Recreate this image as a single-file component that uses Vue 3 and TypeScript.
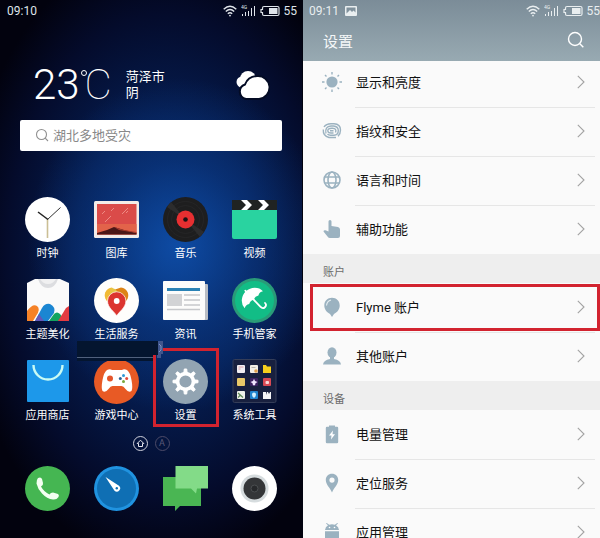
<script setup lang="ts">
import { ref } from 'vue'

interface App {
  id: string
  label: string
  marked?: boolean
}

interface Item {
  id: string
  label: string
  marked?: boolean
}

interface Section {
  title: string
  items: Item[]
}

const query = ref('')

const apps: App[] = [
  { id: 'clock', label: '时钟' },
  { id: 'gallery', label: '图库' },
  { id: 'music', label: '音乐' },
  { id: 'video', label: '视频' },
  { id: 'theme', label: '主题美化' },
  { id: 'life', label: '生活服务' },
  { id: 'news', label: '资讯' },
  { id: 'security', label: '手机管家' },
  { id: 'store', label: '应用商店' },
  { id: 'games', label: '游戏中心' },
  { id: 'settings', label: '设置', marked: true },
  { id: 'tools', label: '系统工具' },
]

const sections: Section[] = [
  {
    title: '',
    items: [
      { id: 'display', label: '显示和亮度' },
      { id: 'finger', label: '指纹和安全' },
      { id: 'language', label: '语言和时间' },
      { id: 'access', label: '辅助功能' },
    ],
  },
  {
    title: '账户',
    items: [
      { id: 'flyme', label: 'Flyme 账户', marked: true },
      { id: 'other', label: '其他账户' },
    ],
  },
  {
    title: '设备',
    items: [
      { id: 'power', label: '电量管理' },
      { id: 'location', label: '定位服务' },
      { id: 'apps', label: '应用管理' },
    ],
  },
]

const teeth = [0, 45, 90, 135, 180, 225, 270, 315]
</script>

<template>
  <main class="screens">
    <section class="home">
      <div class="status">
        <span>09:10</span>
        <span class="status-icons">
          <svg width="14" height="12" viewBox="0 0 14 12" fill="none" stroke="currentColor" stroke-width="1.4">
            <path d="M.7 4.2Q7-1.6 13.3 4.2M2.8 6.5Q7 2.600 11.2 6.5M4.8 8.7Q7 6.7 9.2 8.7" />
            <circle cx="7" cy="10.600" r=".9" fill="currentColor" stroke="none" />
          </svg>
          <svg width="15" height="12" viewBox="0 0 15 12" fill="currentColor">
            <text x="0" y="4" font-size="5">4G</text>
            <path d="M1 9h1v2H1zM4 7h1v4H4zM7 6h1v5H7zM10 3h1v8h-1zM13 1h1v10h-1z" />
          </svg>
          <svg width="20" height="12" viewBox="0 0 20 12" fill="none" stroke="currentColor" stroke-width="1.200">
            <path d="M4 1.500h13.500q1.500 0 1.500 1.500v6q0 1.500-1.500 1.500H4Q2.500 10.500 2.500 9V7.500H1v-3h1.500V3Q2.500 1.500 4 1.500z" />
            <path d="M9 3h8.500v6H9z" fill="currentColor" stroke="none" />
          </svg>
          <span>55</span>
        </span>
      </div>

      <div class="weather">
        <span class="temp">23</span>
        <span class="degree" aria-hidden="true"></span>
        <span class="unit">C</span>
        <span class="place">菏泽市<br />阴</span>
        <svg class="cloud" width="34" height="30" viewBox="0 0 34 30">
          <circle cx="12" cy="9" r="8" fill="#fff" />
          <circle cx="6" cy="12" r="5.500" fill="#fff" />
          <path d="M10 29a7.500 7.500 0 0 1-1-14.500Q12 6.500 21 6a11.300 11.300 0 0 1 2 23z" fill="#fff" stroke="#030b24" stroke-width="2" />
        </svg>
      </div>

      <form class="search" @submit.prevent>
        <svg width="15" height="15" viewBox="0 0 15 15" fill="none" stroke="#909090" stroke-width="1.100">
          <circle cx="6.500" cy="6.500" r="5" />
          <path d="M10.200 10.200l2.800 2.800" />
        </svg>
        <input v-model="query" type="search" aria-label="搜索" placeholder="湖北多地受灾" />
      </form>

      <nav class="apps">
        <button v-for="app in apps" :key="app.id" type="button" class="app" :class="{ marked: app.marked }">
          <svg width="45" height="45" viewBox="0 0 45 45">
            <template v-if="app.id === 'clock'">
              <circle cx="22.500" cy="22.500" r="22.500" fill="#fff" />
              <path d="M22.500 22v19" stroke="#cbbf95" stroke-width="1.600" />
              <path d="M23 22.500L13 15" stroke="#222" stroke-width="1.500" />
              <path d="M22.500 22.500L35.500 10.500" stroke="#333" />
            </template>
            <template v-else-if="app.id === 'gallery'">
              <rect y="4" width="45" height="37" rx="1.500" fill="#f3ece9" />
              <path d="M3 7h39.500v30.500H3z" fill="#da4b49" />
              <path d="M3 27h39.500v10.500H3z" fill="#e2634a" />
              <path d="M3 36l10-3 7-3 10 3 12.500 3v1.500H3z" fill="#4b1718" />
              <path d="M20 30l10 3 12.500 2v1L25 33z" fill="#a83a2e" />
              <path d="M11 25l6-6M28 17l6-6M17 14l3-3M32 16l2-2M8 17l3-3" stroke="#f29b93" stroke-width=".8" />
            </template>
            <template v-else-if="app.id === 'music'">
              <circle cx="22.500" cy="22.500" r="22.500" fill="#1e1e1f" />
              <circle cx="22.500" cy="22.500" r="18" fill="none" stroke="#282829" stroke-width=".7" />
              <circle cx="22.500" cy="22.500" r="14" fill="none" stroke="#282829" stroke-width=".7" />
              <path d="M22.500 22.500L4 10l4-5zM22.500 22.500L41 35l-4 5z" fill="#2c2c2d" />
              <circle cx="22.500" cy="22.500" r="9" fill="#e72f31" />
              <circle cx="22.500" cy="22.500" r="2.300" fill="#1c1214" />
            </template>
            <template v-else-if="app.id === 'video'">
              <path d="M0 12h45v28q0 2-2 2H2q-2 0-2-2z" fill="#29d3a0" />
              <path d="M0 3h45v10H0z" fill="#202322" />
              <path d="M9 3h6l5 5-5 5H9l5-5zM26 3h6l5 5-5 5h-6l5-5z" fill="#fff" />
            </template>
            <template v-else-if="app.id === 'theme'">
              <path d="M10 1h25l9 4v36q0 2-2 2H4q-2 0-2-2V5z" fill="#fafafa" />
              <path d="M13 1h20q-3 9-10 9T13 1z" fill="#dcdde0" />
              <path d="M15 1h16q-3 5-8 5T15 1z" fill="#f0f0f1" />
              <path d="M2 33q6-8 10-5 4 3-1 10l-3 5H2z" fill="#f58227" />
              <path d="M24 43l5-7q3-3 6 0 3 3 0 7z" fill="#12a45f" />
              <path d="M33 43l8-13 3-2v15z" fill="#e23b41" />
              <path d="M10 43l7-13q3-5 8-4 6 3 4 9l-6 8z" fill="#1b86d2" />
              <path d="M10 43l4-7 5 7z" fill="#6257b8" />
            </template>
            <template v-else-if="app.id === 'life'">
              <circle cx="22.500" cy="22.500" r="22.500" fill="#fffefc" />
              <path d="M18 9.500a8 8 0 0 0-5.500 13l5.500 5 5-12z" fill="#f1ba35" />
              <path d="M27 9.500a8 8 0 0 1 5.500 13l-5.500 5-6-16z" fill="#dd8416" />
              <path d="M17 10q6 0 7 6l-7 2q-2-4 0-8z" fill="#e6c545" />
              <path d="M22.700 38C21 34 13.500 30 13.500 23a9.200 9.200 0 0 1 18.400 0c0 7-7.500 11-9.200 15z" fill="#dc352f" stroke="#fff" stroke-width=".7" />
              <circle cx="22.700" cy="23" r="2.900" fill="#fff" />
            </template>
            <template v-else-if="app.id === 'news'">
              <rect x="36" y="6" width="9" height="36" rx="1" fill="#b9bdc4" />
              <rect y="3" width="42" height="39" rx="1" fill="#fcfcfb" />
              <path d="M4 10h33v3H4z" fill="#2a82b5" />
              <path d="M4 16h15v12H4z" fill="#d2d3d5" />
              <path d="M21 17h16M21 22h16M21 27h16M4 31.500h33" stroke="#c6c8cb" stroke-width="1.500" />
            </template>
            <template v-else-if="app.id === 'security'">
              <circle cx="22.500" cy="22.500" r="22.500" fill="#2a9b78" />
              <circle cx="22.500" cy="22.500" r="19.500" fill="#12bd86" />
              <g transform="rotate(-43 22.500 22.500)">
                <path d="M10 21.500a12.500 11.500 0 0 1 25 0q-3-2-6.200 0-3.200-2-6.300 0-3.200-2-6.300 0-3.200-2-6.200 0z" fill="#fff" />
                <path d="M22.500 9v22q0 3.500 3 3.500t3-3" fill="none" stroke="#fff" stroke-width="1.800" stroke-linecap="round" />
              </g>
            </template>
            <template v-else-if="app.id === 'store'">
              <rect x="2" y="1" width="42" height="42" rx="1" fill="#1d98ea" />
              <path d="M8.500 6a14.500 14.500 0 0 0 29 0" fill="none" stroke="#c9fbf4" stroke-width="2.400" />
            </template>
            <template v-else-if="app.id === 'games'">
              <circle cx="22.500" cy="22.500" r="22.500" fill="#e85a25" />
              <path d="M13 11q3-1.500 5 0h10q2-1.500 5 0 3 2 4.500 10t0 11q-3 2-6-2-2-3-4-3h-9q-2 0-4 3-3 4-6 2-1.500-3 0-11T13 11z" fill="#fff" />
              <circle cx="16" cy="19.500" r="3" fill="#e4562c" />
              <circle cx="29.500" cy="16.500" r="1.500" fill="#2d9ad9" />
              <circle cx="26.300" cy="19.500" r="1.500" fill="#2d6294" />
              <circle cx="32.700" cy="19.500" r="1.500" fill="#e34b3b" />
              <circle cx="29.500" cy="22.500" r="1.500" fill="#79a73b" />
            </template>
            <template v-else-if="app.id === 'settings'">
              <circle cx="22.500" cy="22.500" r="22.500" fill="#92a4b2" />
              <path v-for="a in teeth" :key="a" :transform="`rotate(${a} 22.500 22.500)`" d="M20.800 14l.5-4h2.400l.5 4z" fill="#fff" stroke="#fff" stroke-linejoin="round" />
              <circle cx="22.500" cy="22.500" r="7.900" fill="none" stroke="#fff" stroke-width="3.600" />
            </template>
            <template v-else>
              <rect x="1" y=".5" width="43" height="43" rx="1.500" fill="#18203f" stroke="#343d58" />
              <rect x="5" y="6" width="8" height="8" rx="1" fill="#f1eef2" />
              <path d="M6.500 8h5M6.500 10h2" stroke="#d9a0a6" />
              <rect x="18" y="6" width="8" height="8" rx="1" fill="#f3efe6" />
              <path d="M19.500 8.500h4" stroke="#b8b4ac" />
              <circle cx="24" cy="12" r="1.800" fill="#e0a04c" />
              <path d="M31 6h3l1 1.500h4V14h-8z" fill="#f7cf1d" />
              <rect x="5" y="19" width="8" height="8" rx="1" fill="#e9c968" />
              <rect x="18" y="19" width="8" height="8" rx="1" fill="#3b2260" />
              <path d="M22 19.800l1 2.200 2.500 1-2 1.200-.5 2h-2l-.5-2-2-1.200 2.500-1z" fill="#f0e6ff" />
              <rect x="31" y="19" width="8" height="8" rx="1" fill="#d94a55" />
              <rect x="33.500" y="22" width="3.500" height="3" rx="1" fill="#f8d8d8" />
              <rect x="5" y="32" width="8" height="8" rx="1" fill="#eef0ea" />
              <path d="M6 34l5 4.500M6 38.500l2-2" stroke="#5f8a58" stroke-width="1.200" />
              <rect x="18" y="32" width="8" height="8" rx="1" fill="#1f83cf" />
              <path d="M22 33.500q2 0 2 2T22 39q-2-1.500-2-3.500t2-2z" fill="#d4f1ff" />
              <path d="M31 33h3v3l1-3h1l1 2 1-2h1v7h-8z" fill="#f4f4f6" />
            </template>
          </svg>
          <span>{{ app.label }}</span>
        </button>
        <svg class="patch" width="86" height="20" viewBox="0 0 86 20" aria-hidden="true">
          <path d="M0 0h81v14h-5v6H0z" fill="#04152f" />
          <path d="M0 16.500h76" stroke="#50607c" />
          <path d="M81 0h5v13h-2v4h-4v-3h1z" fill="#40558c" />
          <path d="M82 3l2 2v4l-2 2" fill="none" stroke="#7f93c4" />
        </svg>
      </nav>

      <div class="pages">
        <button type="button" class="page active" aria-label="主屏">
          <svg width="9" height="9" viewBox="0 0 9 9" fill="none" stroke="currentColor">
            <path d="M1.200 4.500L4.500 1.200l3.300 3.300H6.500V7.500h-4v-3z" />
          </svg>
        </button>
        <button type="button" class="page">A</button>
      </div>

      <nav class="dock">
        <button type="button" class="app" aria-label="电话">
          <svg width="45" height="45" viewBox="0 0 45 45">
            <circle cx="22.500" cy="22.500" r="22.500" fill="#45b652" />
            <path d="M13 12q3-1.500 4 1l1 4q.5 2-2 3.500 3 5.500 8.500 8 1-2 3.500-2l5 1.500q1.500 1 .5 3-2 3-5.500 2.500-6-.5-11-6-4.500-5-5.500-10 0-4 1.500-5.500z" fill="#f3fff1" />
          </svg>
        </button>
        <button type="button" class="app" aria-label="浏览器">
          <svg width="45" height="45" viewBox="0 0 45 45">
            <circle cx="22.500" cy="22.500" r="22.500" fill="#2093e0" />
            <circle cx="22.500" cy="22.500" r="19.500" fill="#0f6fb4" />
            <path d="M11.500 11l13.500 8.700a3.300 3.300 0 0 1-4.500 5z" fill="#fff" />
            <circle cx="22.800" cy="22.300" r="1.200" fill="#0f6fb4" />
          </svg>
        </button>
        <button type="button" class="app" aria-label="信息">
          <svg width="45" height="45" viewBox="0 0 45 45">
            <path d="M0 11h38v29H17l-5 5v-5H0z" fill="#4ab653" />
            <path d="M12.500 0H45v22.500H34l-1 5-5-5H12.500z" fill="#83db88" />
          </svg>
        </button>
        <button type="button" class="app" aria-label="相机">
          <svg width="45" height="45" viewBox="0 0 45 45">
            <circle cx="22.500" cy="22.500" r="22.500" fill="#fff" />
            <circle cx="22.500" cy="22.500" r="14" fill="#d6dcde" />
            <circle cx="22.500" cy="22.500" r="11" fill="#343638" />
            <circle cx="22.500" cy="22.500" r="3.500" fill="#27292b" stroke="#4b4e50" />
          </svg>
        </button>
      </nav>
    </section>

    <section class="settings">
      <header class="head">
        <div class="status">
          <span class="clock">
            09:11
            <svg width="12" height="10" viewBox="0 0 12 10">
              <path d="M1 0h10q1 0 1 1v8q0 1-1 1H1q-1 0-1-1V1q0-1 1-1zM1.500 1.500v6L5 4l2 2 1.500-1.500 2 2v-5z" fill="currentColor" fill-rule="evenodd" />
            </svg>
          </span>
          <span class="status-icons">
            <svg width="14" height="12" viewBox="0 0 14 12" fill="none" stroke="currentColor" stroke-width="1.4">
              <path d="M.7 4.2Q7-1.6 13.3 4.2M2.8 6.5Q7 2.600 11.2 6.5M4.8 8.7Q7 6.7 9.2 8.7" />
              <circle cx="7" cy="10.600" r=".9" fill="currentColor" stroke="none" />
            </svg>
            <svg width="15" height="12" viewBox="0 0 15 12" fill="currentColor">
              <text x="0" y="4" font-size="5">4G</text>
              <path d="M1 9h1v2H1zM4 7h1v4H4zM7 6h1v5H7zM10 3h1v8h-1zM13 1h1v10h-1z" />
            </svg>
            <svg width="20" height="12" viewBox="0 0 20 12" fill="none" stroke="currentColor" stroke-width="1.200">
              <path d="M4 1.500h13.500q1.500 0 1.500 1.500v6q0 1.500-1.500 1.500H4Q2.500 10.500 2.500 9V7.500H1v-3h1.500V3Q2.500 1.500 4 1.500z" />
              <path d="M9 3h8.500v6H9z" fill="currentColor" stroke="none" />
            </svg>
            <span>55</span>
          </span>
        </div>
        <div class="titlebar">
          <h1>设置</h1>
          <button type="button" class="find" aria-label="搜索设置">
            <svg width="18" height="18" viewBox="0 0 18 18" fill="none" stroke="#fff" stroke-width="1.400">
              <circle cx="8" cy="8" r="6.500" />
              <path d="M12.800 12.800l3.500 3.500" />
            </svg>
          </button>
        </div>
      </header>

      <div class="list">
        <template v-for="section in sections" :key="section.title">
          <h2 v-if="section.title">{{ section.title }}</h2>
          <ul>
            <li v-for="item in section.items" :key="item.id">
              <a href="#" :class="{ marked: item.marked }">
                <svg width="20" height="20" viewBox="0 0 20 20" fill="#9bb2c0">
                  <template v-if="item.id === 'display'">
                    <circle cx="10" cy="10" r="5.600" />
                    <path d="M10 0v2.500M10 17.500V20M0 10h2.500M17.500 10H20M3 3l1.500 1.500M15.500 15.500L17 17M17 3l-1.500 1.500M4.500 15.500L3 17" stroke="#9bb2c0" stroke-width="1.400" />
                  </template>
                  <g v-else-if="item.id === 'finger'" fill="none" stroke="#9bb2c0" stroke-width="1.400">
                    <path d="M2 6Q4 2.700 9 2.700h3q6.500.3 6.500 6.300 0 4-2.500 6.300M1.300 8.500Q.8 15 7 16.500h7M4 12.500Q2.500 5.500 9 5h2.500q4.800.5 4.800 4.500 0 4.500-4.300 4.700H8.500q-2 0-3-1.200M13.500 11.500q1.500-4.200-3-4.300-5-.2-4.700 2.800.3 2 3.200 2h2.500M8 9.700h3.500" />
                  </g>
                  <g v-else-if="item.id === 'language'" fill="none" stroke="#9bb2c0" stroke-width="1.600">
                    <circle cx="10" cy="10" r="8" />
                    <ellipse cx="10" cy="10" rx="4" ry="8" />
                    <path d="M2.700 7h14.600M2.700 13h14.600" />
                  </g>
                  <path v-else-if="item.id === 'access'" d="M6.500 2.500q0-1.500 1.500-1.500t1.500 1.500V7l6.500 1q2 .5 2 2.500v6.500q0 2-2 2H8q-1.500 0-2.500-1.500L1.500 12.500q0-1.500 2-1.200l3 1.200z" />
                  <g v-else-if="item.id === 'flyme'">
                    <path d="M10 .8c4.500 0 7.700 3.200 7.700 7.700 0 4-2.700 7-5.700 8.500l-2 3-2-3C5 15.500 2.300 12.500 2.300 8.500 2.300 4 5.500.8 10 .8z" />
                    <path d="M4.500 8.500Q5 4 9 3" fill="none" stroke="#e5edf1" stroke-width="1.100" />
                  </g>
                  <g v-else-if="item.id === 'other'">
                    <ellipse cx="10" cy="6.500" rx="4.500" ry="5.300" />
                    <path d="M8 10h4v3q6.500 1 7 5.500H1Q1.500 14 8 13z" />
                  </g>
                  <g v-else-if="item.id === 'power'">
                    <path d="M7 1.500h6v1.200h2q1.200 0 1.200 1.300v14q0 1.200-1.200 1.200H5q-1.200 0-1.200-1.200V4q0-1.300 1.200-1.300h2z" />
                    <path d="M11 6.500l-4 5h2.500l-.5 4 4-5.200h-2.500z" fill="#fff" />
                  </g>
                  <path v-else-if="item.id === 'location'" fill-rule="evenodd" d="M10 .8c3.600 0 6.200 2.700 6.200 6.200C16.200 11.500 12.500 14 10 19.500 7.500 14 3.800 11.500 3.800 7 3.800 3.500 6.400.8 10 .8zM10 4.500a2.600 2.600 0 1 0 0 5.200 2.600 2.600 0 0 0 0-5.200z" />
                  <g v-else>
                    <path d="M3 8q.3-3.300 3-4.800L4 1.500l.7-.6 2.500 1.900q2.800-1 5.600 0L15.300.9l.7.6-2 1.700q2.700 1.500 3 4.800zM3 9.200h14V17q0 2-2 2H5q-2 0-2-2z" />
                    <circle cx="7.500" cy="5.500" r=".8" fill="#fff" />
                    <circle cx="12.500" cy="5.500" r=".8" fill="#fff" />
                  </g>
                </svg>
                <span>{{ item.label }}</span>
                <svg class="chevron" width="8" height="14" viewBox="0 0 8 14" fill="none" stroke="#a3a3a3" stroke-width="1.100">
                  <path d="M.8.8L7 7 .8 13.200" />
                </svg>
              </a>
            </li>
          </ul>
        </template>
      </div>
    </section>
  </main>
</template>

<style>
body {
  margin: 0;
  background: #02030f;
}
</style>

<style scoped>
.screens {
  display: grid;
  grid-template-columns: 302fr 298fr;
  height: 100vh;
  overflow: hidden;
  font-family: Roboto, 'Noto Sans CJK SC', sans-serif;
}

button {
  margin: 0;
  padding: 0;
  border: 0;
  background: none;
  color: inherit;
  font: inherit;
  cursor: pointer;
}

svg {
  display: block;
  flex: none;
}

.home {
  min-width: 0;
  color: #fff;
  background:
    radial-gradient(ellipse 50% 30% at 59% 44%, rgba(16, 84, 180, 0.8), rgba(12, 64, 146, 0.5) 50%, rgba(6, 30, 90, 0) 100%),
    radial-gradient(ellipse 68% 56% at 55% 46%, #062a68, #051c4e 45%, #040b2b 78%, #02020e);
}

.status {
  display: flex;
  align-items: center;
  justify-content: space-between;
  height: 21px;
  padding: 0 5px 0 7px;
  font-size: 12px;
  color: #dfe4ea;
}

.status-icons,
.clock {
  display: flex;
  align-items: center;
  gap: 4px;
}

.clock {
  gap: 6px;
}

.weather {
  display: flex;
  align-items: center;
  height: 44px;
  margin: 42px 32px 0 33px;
}

.temp {
  font-size: 42px;
  font-weight: 300;
  line-height: 44px;
}

.degree {
  align-self: flex-start;
  box-sizing: border-box;
  width: 6px;
  height: 6px;
  margin: 7px 0 0 1px;
  border: 1px solid #fff;
  border-radius: 50%;
}

.unit {
  margin-left: -2px;
  font-size: 42px;
  font-weight: 100;
  line-height: 44px;
}

.place {
  margin-left: 14px;
  font-size: 13px;
  line-height: 16px;
}

.cloud {
  margin-left: auto;
}

.search {
  display: flex;
  align-items: center;
  gap: 3px;
  height: 31px;
  margin: 13px 20px 0;
  padding-left: 15px;
  border-radius: 2px;
  background: #fff;
}

.search input {
  flex: 1;
  min-width: 0;
  padding: 0;
  border: 0;
  outline: 0;
  background: none;
  color: #555;
  font: inherit;
  font-size: 13px;
}

.search input::placeholder {
  color: #888;
  opacity: 1;
}

.apps,
.dock {
  position: relative;
  display: grid;
  grid-template-columns: repeat(4, 1fr);
  row-gap: 14px;
  margin: 46px 13px 0;
}

.app {
  position: relative;
  display: flex;
  flex-direction: column;
  align-items: center;
  gap: 2px;
  font-size: 11px;
  line-height: 20px;
}

.app.marked::after {
  content: '';
  position: absolute;
  inset: -11px 1px -1px 2px;
  border: 3px solid #d2232f;
}

.patch {
  position: absolute;
  left: 64px;
  top: 144px;
}

.pages {
  display: flex;
  justify-content: center;
  gap: 7px;
  margin-top: 10px;
}

.page {
  display: grid;
  place-items: center;
  box-sizing: border-box;
  width: 15px;
  height: 15px;
  border: 1px solid #4c4a68;
  border-radius: 50%;
  color: #5c5a78;
  font-size: 9px;
  line-height: 13px;
}

.page.active {
  border-color: #cfd0dc;
  color: #e8e8f0;
}

.dock {
  margin-top: 15px;
}

.settings {
  min-width: 0;
  border-left: 1px solid #02030f;
  background: #fafafa;
}

.head {
  position: relative;
  color: #f4f7f8;
  background: linear-gradient(#7b8c98, #98aab2);
}

.head .status {
  padding: 0 0 0 6px;
  color: #e9eef0;
}

.titlebar {
  display: flex;
  align-items: center;
  justify-content: space-between;
  box-sizing: border-box;
  height: 40px;
  padding: 0 15px 2px 20px;
}

h1 {
  margin: 0;
  font-size: 15px;
  font-weight: 400;
}

.list {
  margin-top: -3px;
}

h2 {
  height: 29px;
  margin: 0;
  padding: 5px 20px 0;
  box-sizing: border-box;
  background: #eee;
  color: #6c6c6c;
  font-size: 11px;
  font-weight: 400;
  line-height: 28px;
}

ul {
  margin: 0;
  padding: 0;
  list-style: none;
}

li a {
  position: relative;
  display: flex;
  align-items: center;
  gap: 14px;
  box-sizing: border-box;
  height: 49px;
  padding: 0 15px 2px 19px;
  color: #111;
  font-size: 13px;
  text-decoration: none;
}

li + li a::before {
  content: '';
  position: absolute;
  inset: 0 5px auto 52px;
  border-top: 1px solid #e6e6e6;
}

.chevron {
  margin-left: auto;
}

li a.marked::after {
  content: '';
  position: absolute;
  inset: 1px 0 1px 7px;
  border: 3px solid #d2232f;
}
</style>
